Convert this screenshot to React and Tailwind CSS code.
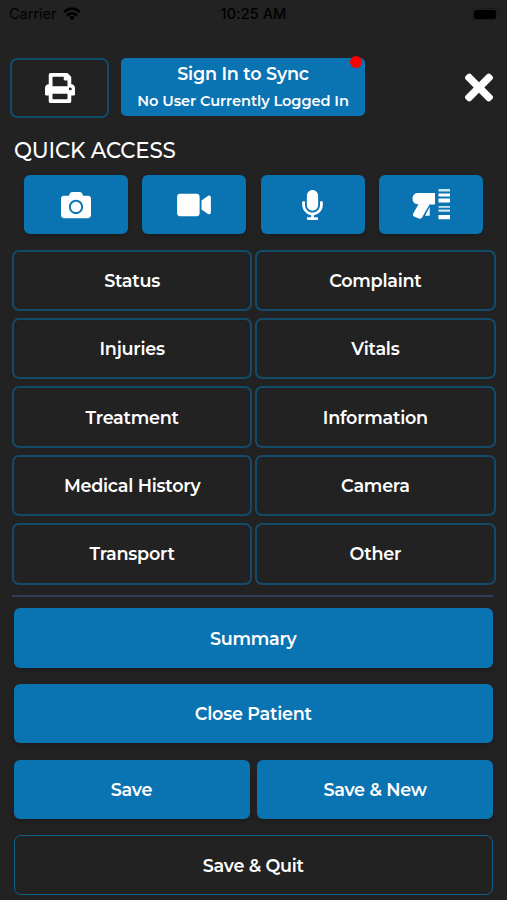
import React from 'react';
import { FaPrint, FaTimes, FaCamera, FaVideo, FaMicrophone } from 'react-icons/fa';

const menuItems = [
  'Status',
  'Complaint',
  'Injuries',
  'Vitals',
  'Treatment',
  'Information',
  'Medical History',
  'Camera',
  'Transport',
  'Other'
];

// Barcode scanner glyph
function ScannerIcon() {
  return (
    <svg width="38" height="31" viewBox="0 0 38 31" fill="currentColor">
      <path d="M5.5 4H23V15.5H17.5L10 28.5Q8.8 30.3 6.8 29.6L1.9 27.4Q0.2 26.4 1.2 24.5L6.5 15.3H5.5Q0.5 14.6 0.5 9.7Q0.5 4.6 5.5 4Z" />
      <path d="M17.7 18V26.8H13Z" />
      <path opacity="0.8" d="M26.5 0H38V2.4H26.5ZM26.5 17H38V18.8H26.5ZM26.5 20.6H38V22.8H26.5Z" />
      <path d="M26.5 4.4H38V7.4H26.5ZM26.5 9.4H38V13.6H26.5ZM26.5 26H38V30.3H26.5Z" />
    </svg>
  );
}

function StatusBar() {
  return (
    <div className="grid h-[58px] grid-cols-3 items-start pt-[5px] font-['Inter',sans-serif] text-black">
      <div className="flex h-[18px] items-center gap-[6px] pl-[9px] text-[14.5px]">
        <span>Carrier</span>
        <svg width="18" height="14" viewBox="0 0 18 14" fill="none" stroke="currentColor" strokeWidth="2.6">
          <path d="M1 5Q9 -2 17 5" />
          <path d="M4 8.4Q9 4.2 14 8.4" />
          <path d="M6.2 10.2Q9 8 11.8 10.2L9 13.4Z" fill="currentColor" stroke="none" />
        </svg>
      </div>
      <div className="h-[18px] text-center text-[14.5px] leading-[18px] font-medium tracking-[0.1px]">10:25 AM</div>
      <div className="flex h-[18px] items-center justify-end gap-px pr-[7px]">
        <div className="flex h-[12px] w-[26px] items-center justify-center rounded-[3px] border border-[#1b1b1b]">
          <div className="h-[9px] w-[22px] rounded-[2px] bg-black" />
        </div>
        <div className="h-[4px] w-px bg-[#1b1b1b]" />
      </div>
    </div>
  );
}

function QuickButton({ children }) {
  return (
    <button className="flex h-[59px] w-[104px] items-center justify-center rounded-[6px] bg-[#0a73b1] shadow-md">
      {children}
    </button>
  );
}

function FilledButton({ label, className = '' }) {
  return (
    <button className={`h-[59.5px] rounded-[6px] bg-[#0a73b1] pt-[2px] text-[17.6px] font-semibold tracking-[-0.25px] shadow-md ${className}`}>
      {label}
    </button>
  );
}

export default function App() {
  return (
    <div className="h-[900px] w-[507px] overflow-hidden bg-[#222222] font-['Montserrat','Inter',sans-serif] text-white">
      <StatusBar />

      {/* Header */}
      <div className="flex h-[60px] items-start pl-[10px]">
        <button className="flex h-[60px] w-[99px] items-center justify-center rounded-[7px] border-2 border-[#134b6b]">
          <FaPrint className="h-[30px] w-[30px]" />
        </button>
        <button className="relative ml-[12px] h-[58px] w-[244px] rounded-[5px] bg-[#0a73b1]">
          <div className="h-[32px] text-[17.6px] leading-[32px] font-semibold tracking-[-0.2px]">Sign In to Sync</div>
          <div className="h-[26px] text-[14.6px] leading-[22px] font-semibold tracking-[-0.08px]">No User Currently Logged In</div>
          <span className="absolute -top-[2px] right-[3px] h-[12px] w-[12px] rounded-full bg-[#ff0000]" />
        </button>
        <button className="ml-[99px] flex h-[58px] w-[29px] items-center justify-center">
          <FaTimes className="h-[41px] w-[28px] shrink-0" />
        </button>
      </div>

      <h2 className="mt-[18px] h-[28px] pl-[14px] text-[21.4px] leading-[28px] font-medium tracking-[-0.2px]">QUICK ACCESS</h2>

      <div className="mt-[11px] flex gap-[14.6px] pl-[23.5px]">
        <QuickButton>
          <FaCamera className="h-[30px] w-[30px]" />
        </QuickButton>
        <QuickButton>
          <FaVideo className="h-[30px] w-[34px]" />
        </QuickButton>
        <QuickButton>
          <FaMicrophone className="h-[30px] w-[21px]" />
        </QuickButton>
        <QuickButton>
          <ScannerIcon />
        </QuickButton>
      </div>

      {/* Sections */}
      <div className="mt-[15.5px] ml-[12px] grid w-[483.5px] grid-cols-2 gap-x-[3px] gap-y-[6.9px]">
        {menuItems.map(item => (
          <button
            key={item}
            className="h-[61.5px] rounded-[7px] border-2 border-[#134b6b] pt-[1.5px] text-[17.6px] font-semibold tracking-[-0.25px]"
          >
            {item}
          </button>
        ))}
      </div>

      <div className="mt-[10px] ml-[12px] h-[2px] w-[481px] bg-[#2c3f55]" />

      {/* Actions */}
      <div className="mt-[11.5px] ml-[13.5px] grid w-[479.5px] grid-cols-2 gap-x-[7.5px] gap-y-[16.3px]">
        <FilledButton label="Summary" className="col-span-2" />
        <FilledButton label="Close Patient" className="col-span-2" />
        <FilledButton label="Save" />
        <FilledButton label="Save & New" />
        <button className="col-span-2 h-[60px] rounded-[7px] border border-[#0f5f8f] pt-px text-[17.6px] font-semibold tracking-[-0.25px]">
          Save &amp; Quit
        </button>
      </div>
    </div>
  );
}
